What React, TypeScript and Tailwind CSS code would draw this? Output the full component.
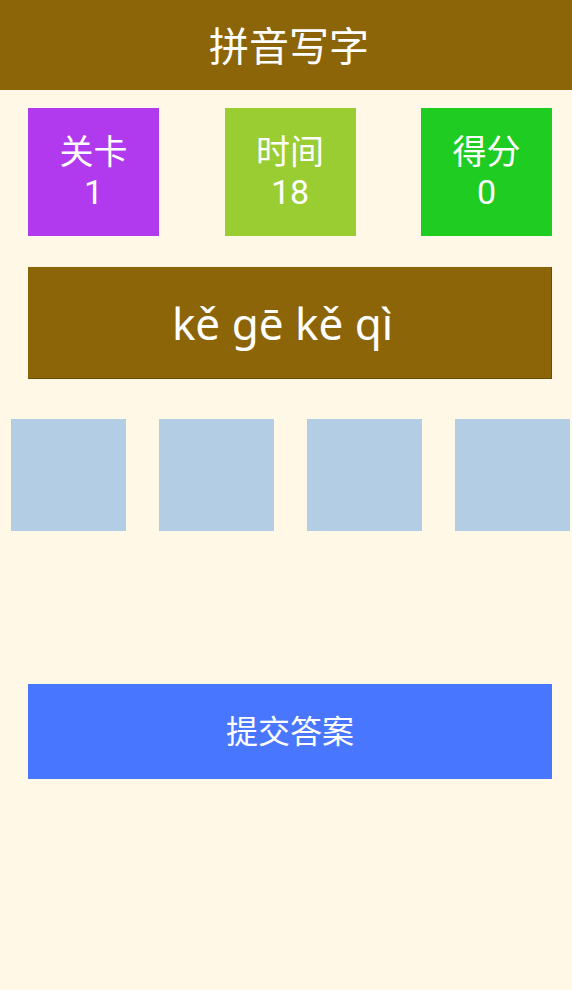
export default function App() {
  const stats = [
    { label: "关卡", value: "1", color: "bg-[#b23aee]" },
    { label: "时间", value: "18", color: "bg-[#9acd32]" },
    { label: "得分", value: "0", color: "bg-[#1fcc22]" },
  ];

  return (
    <div
      className="min-h-[990px] w-full bg-[#fff8e7] text-white"
      style={{ fontFamily: 'Roboto, "Noto Sans CJK SC", sans-serif' }}
    >
      <header className="flex h-[90px] items-center justify-center bg-[#8b6508] pl-[6px] pt-[5px]">
        <h1 className="text-[40px] leading-none">拼音写字</h1>
      </header>

      <div className="mt-[18px] flex justify-between px-[20px] pl-[28px]">
        {stats.map((s) => (
          <div
            key={s.label}
            className={`flex h-[128px] w-[131px] flex-col items-center justify-center ${s.color}`}
          >
            <span className="text-[34px] leading-[40px]">{s.label}</span>
            <span className="text-[34px] leading-[40px]">{s.value}</span>
          </div>
        ))}
      </div>

      <div className="mx-[20px] ml-[28px] mt-[31px] flex h-[112px] items-center justify-center border-b border-r border-[#6e4e05] bg-[#8b6508] pr-[14px]">
        <span className="font-['Noto_Sans',sans-serif] text-[44px] leading-none">
          kě gē kě qì
        </span>
      </div>

      <div className="mt-[40px] flex gap-[33px] pl-[11px]">
        {[0, 1, 2, 3].map((i) => (
          <div key={i} className="h-[112px] w-[115px] shrink-0 bg-[#b3cde5]" />
        ))}
      </div>

      <div className="mx-[20px] ml-[28px] mt-[153px]">
        <button className="flex h-[95px] w-full items-center justify-center bg-[#4876ff] text-[32px] text-white">
          提交答案
        </button>
      </div>
    </div>
  );
}
